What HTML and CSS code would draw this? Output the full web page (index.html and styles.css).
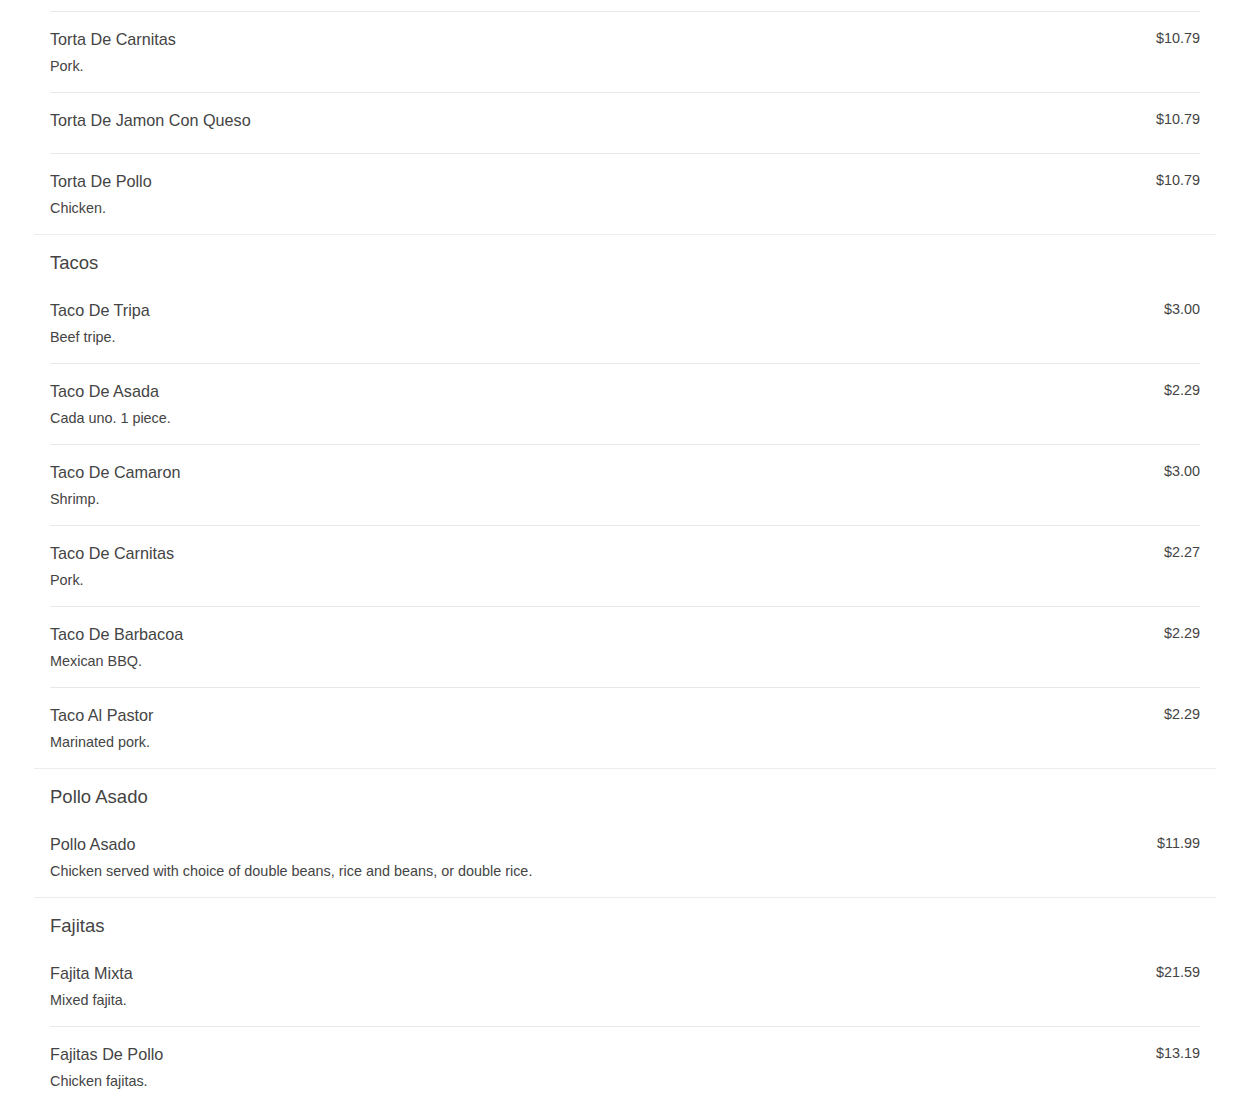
FILE: index.html
```html
<!DOCTYPE html>
<html lang="en">
<head>
<meta charset="utf-8">
<title>Menu</title>
<link rel="stylesheet" href="styles.css">
</head>
<body>
<main class="menu">
  <section class="section">
    <div class="item item-tail"></div>
    <div class="item">
      <div class="item-text"><div class="name">Torta De Carnitas</div><div class="desc">Pork.</div></div>
      <div class="price">$10.79</div>
    </div>
    <div class="item">
      <div class="item-text"><div class="name">Torta De Jamon Con Queso</div></div>
      <div class="price">$10.79</div>
    </div>
    <div class="item">
      <div class="item-text"><div class="name">Torta De Pollo</div><div class="desc">Chicken.</div></div>
      <div class="price">$10.79</div>
    </div>
  </section>
  <section class="section">
    <h2 class="section-title">Tacos</h2>
    <div class="item">
      <div class="item-text"><div class="name">Taco De Tripa</div><div class="desc">Beef tripe.</div></div>
      <div class="price">$3.00</div>
    </div>
    <div class="item">
      <div class="item-text"><div class="name">Taco De Asada</div><div class="desc">Cada uno. 1 piece.</div></div>
      <div class="price">$2.29</div>
    </div>
    <div class="item">
      <div class="item-text"><div class="name">Taco De Camaron</div><div class="desc">Shrimp.</div></div>
      <div class="price">$3.00</div>
    </div>
    <div class="item">
      <div class="item-text"><div class="name">Taco De Carnitas</div><div class="desc">Pork.</div></div>
      <div class="price">$2.27</div>
    </div>
    <div class="item">
      <div class="item-text"><div class="name">Taco De Barbacoa</div><div class="desc">Mexican BBQ.</div></div>
      <div class="price">$2.29</div>
    </div>
    <div class="item">
      <div class="item-text"><div class="name">Taco Al Pastor</div><div class="desc">Marinated pork.</div></div>
      <div class="price">$2.29</div>
    </div>
  </section>
  <section class="section">
    <h2 class="section-title">Pollo Asado</h2>
    <div class="item">
      <div class="item-text"><div class="name">Pollo Asado</div><div class="desc">Chicken served with choice of double beans, rice and beans, or double rice.</div></div>
      <div class="price">$11.99</div>
    </div>
  </section>
  <section class="section">
    <h2 class="section-title">Fajitas</h2>
    <div class="item">
      <div class="item-text"><div class="name">Fajita Mixta</div><div class="desc">Mixed fajita.</div></div>
      <div class="price">$21.59</div>
    </div>
    <div class="item">
      <div class="item-text"><div class="name">Fajitas De Pollo</div><div class="desc">Chicken fajitas.</div></div>
      <div class="price">$13.19</div>
    </div>
  </section>
</main>
</body>
</html>
```
FILE: styles.css
```css
html, body {
  margin: 0;
  padding: 0;
  background: #fff;
}
body {
  font-family: "Liberation Sans", Arial, sans-serif;
  color: #444;
  overflow: hidden;
}
.menu {
  padding: 0 34px;
}
.section {
  padding: 0 16px;
  border-bottom: 1px solid #ececec;
}
.section-title {
  margin: 0;
  padding: 17px 0 9px;
  font-size: 18.5px;
  line-height: 22px;
  font-weight: normal;
  color: #444;
}
.item {
  display: flex;
  justify-content: space-between;
  align-items: flex-start;
  box-sizing: border-box;
  min-height: 61px;
  padding: 16px 0 15px;
  border-bottom: 1px solid #e8e8e8;
}
.item:last-child {
  border-bottom: none;
  min-height: 60px;
}
.item-tail {
  min-height: 0;
  height: 12px;
  padding: 0;
}
.name {
  font-size: 16.2px;
  line-height: 22px;
  color: #444;
}
.desc {
  margin-top: 5px;
  font-size: 14.4px;
  line-height: 22px;
  color: #444;
}
.price {
  font-size: 14.4px;
  line-height: 20px;
  color: #444;
}
```
